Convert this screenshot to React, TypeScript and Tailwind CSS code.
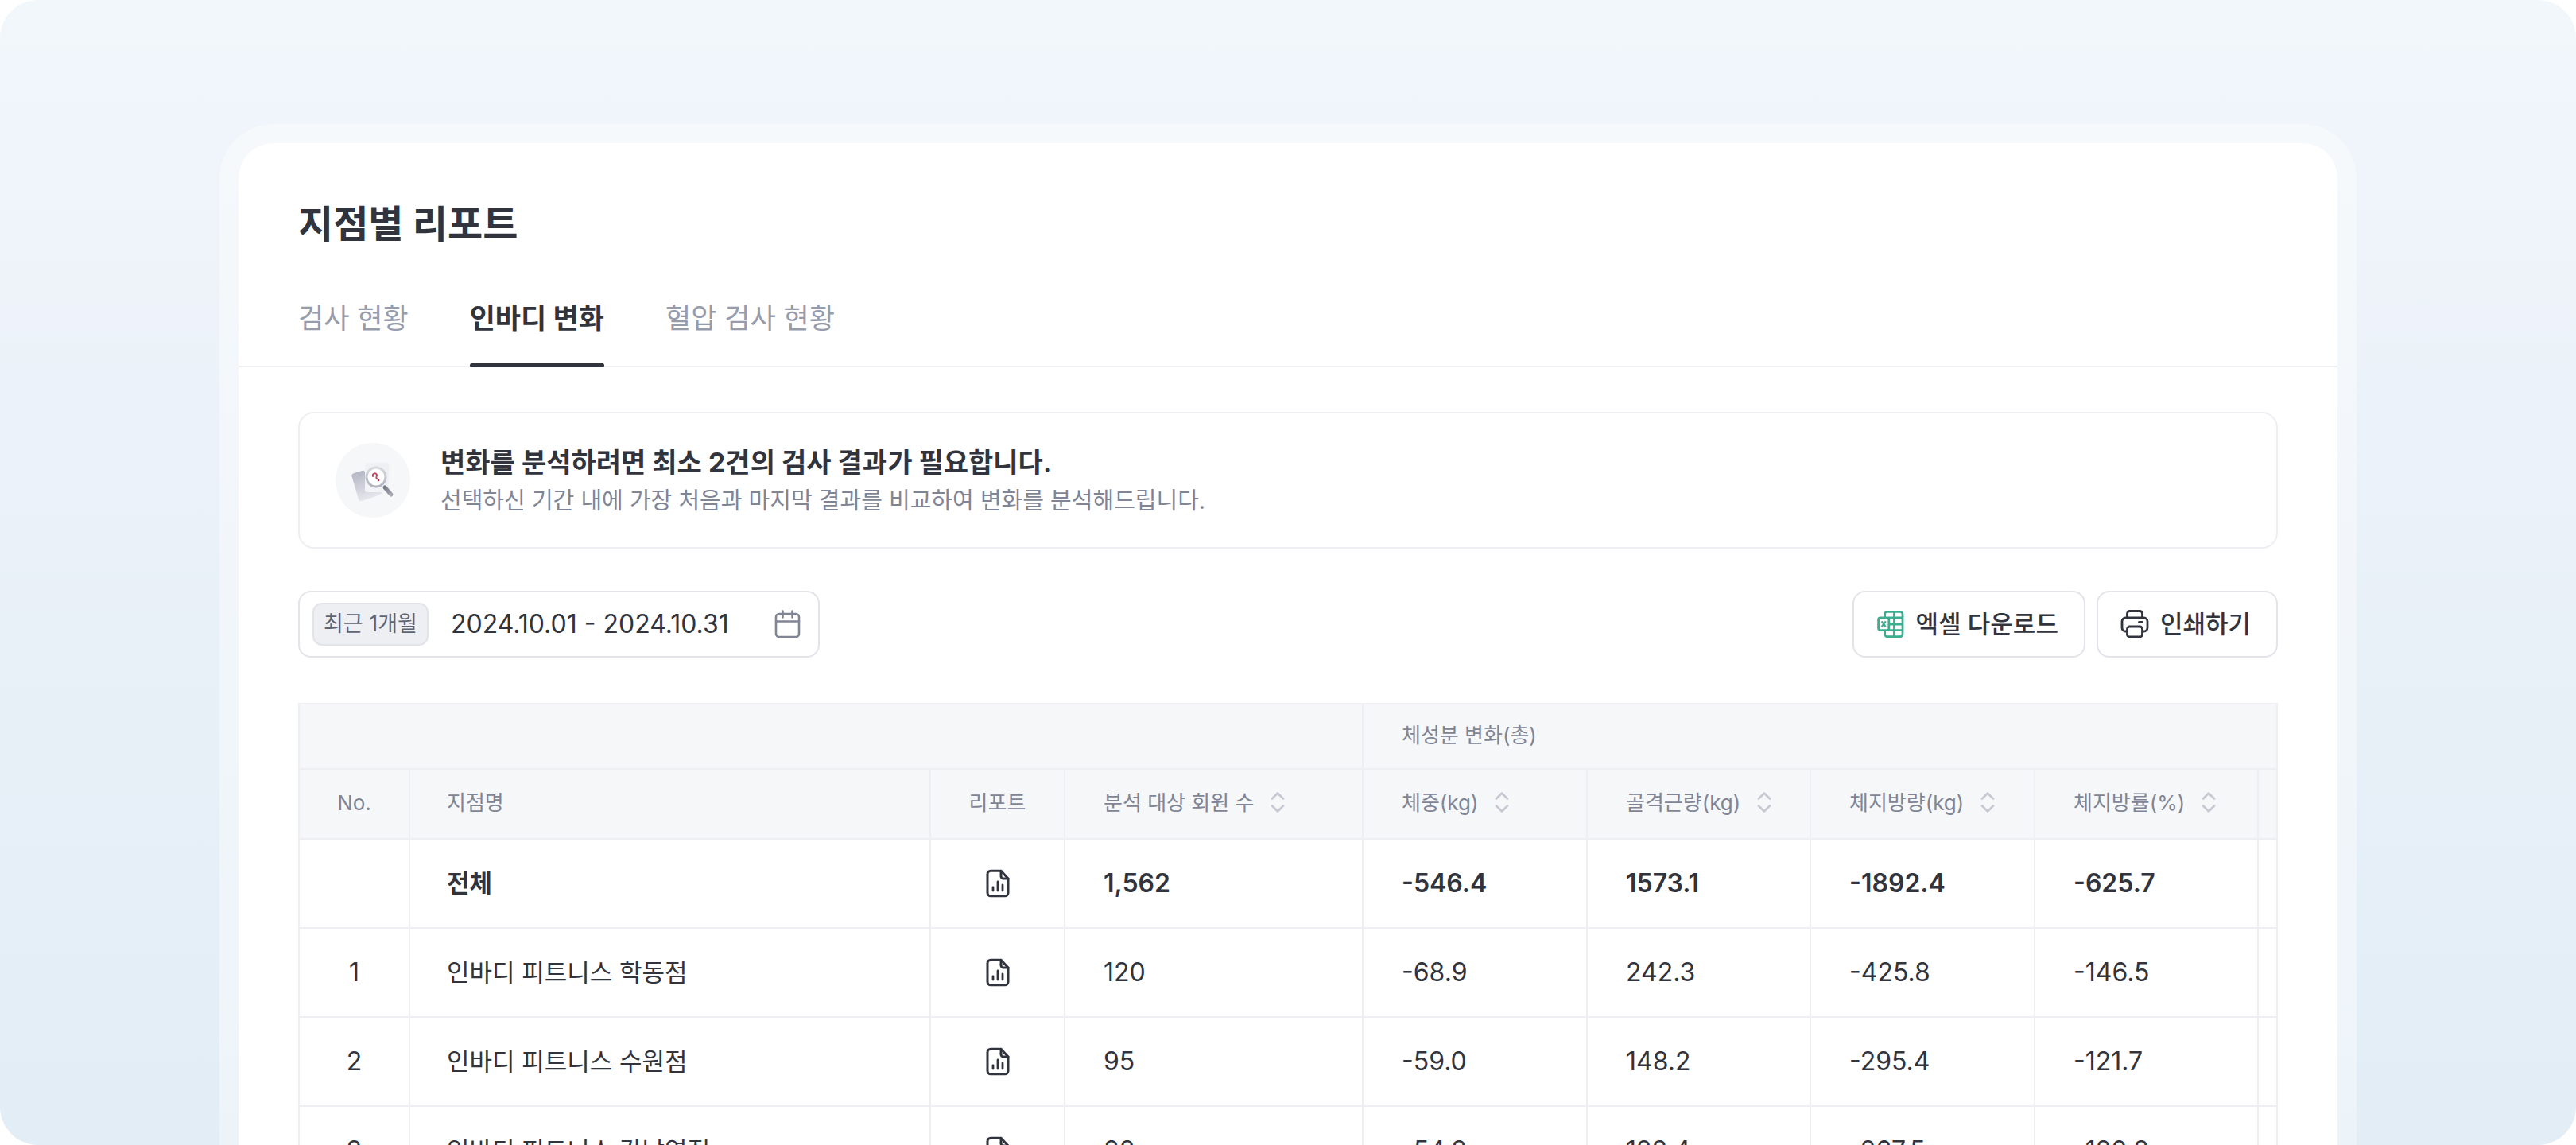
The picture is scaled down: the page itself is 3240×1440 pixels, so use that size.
import type { ReactNode } from "react";

const FONT = "font-['Inter','Noto_Sans_CJK_KR',sans-serif]";

const tabs = [
  { label: "검사 현황", active: false },
  { label: "인바디 변화", active: true },
  { label: "혈압 검사 현황", active: false },
];

const sortable = ["분석 대상 회원 수", "체중(kg)", "골격근량(kg)", "체지방량(kg)", "체지방률(%)"];

const rows = [
  { no: "", name: "전체", values: ["1,562", "-546.4", "1573.1", "-1892.4", "-625.7"], total: true },
  { no: "1", name: "인바디 피트니스 학동점", values: ["120", "-68.9", "242.3", "-425.8", "-146.5"], total: false },
  { no: "2", name: "인바디 피트니스 수원점", values: ["95", "-59.0", "148.2", "-295.4", "-121.7"], total: false },
  { no: "3", name: "인바디 피트니스 강남역점", values: ["88", "-54.8", "128.4", "-267.5", "-120.8"], total: false },
];

function SearchIllustration() {
  return (
    <svg viewBox="0 0 94 94" className="size-[94px] shrink-0" aria-hidden="true">
      <defs>
        <linearGradient id="back" x1="0" y1="0" x2="0.3" y2="1">
          <stop offset="0" stopColor="#aeb2bf" />
          <stop offset="1" stopColor="#e6e7ed" />
        </linearGradient>
        <linearGradient id="front" x1="1" y1="0" x2="0" y2="1">
          <stop offset="0" stopColor="#eeeff2" />
          <stop offset="1" stopColor="#f3f4f7" />
        </linearGradient>
        <linearGradient id="ring" x1="0" y1="0" x2="0" y2="1">
          <stop offset="0" stopColor="#d6d8de" />
          <stop offset="1" stopColor="#b0b4bf" />
        </linearGradient>
        <linearGradient id="handle" x1="0" y1="0" x2="1" y2="1">
          <stop offset="0" stopColor="#777b85" />
          <stop offset="1" stopColor="#a5a8b0" />
        </linearGradient>
      </defs>
      <circle cx="47" cy="47" r="47" fill="#f6f7f9" />
      <path d="M22 38.500L35 34.500 58 56V63a3 3 0 0 1-2 2.500L33 73a3 3 0 0 1-4-2L20.500 42a3 3 0 0 1 1.500-3.500Z" fill="url(#back)" />
      <rect x="37" y="25" width="30" height="37" rx="3" fill="url(#front)" />
      <path d="m62 56 8 9" stroke="url(#handle)" strokeWidth="5" strokeLinecap="round" />
      <circle cx="51" cy="43" r="12" fill="#fff" stroke="url(#ring)" strokeWidth="3" />
      <path d="M47 42c-1-4 4-5 5-2 .6 2-2 3 0 5" fill="none" stroke="#c34a60" strokeWidth="2" strokeLinecap="round" />
      <circle cx="54" cy="47" r="1.300" fill="#b5213d" />
    </svg>
  );
}

function CalendarIcon() {
  return (
    <svg viewBox="0 0 36 36" className="size-9 shrink-0" fill="none" stroke="#7f8595" strokeWidth="2.600" strokeLinecap="round" strokeLinejoin="round" aria-hidden="true">
      <rect x="3" y="5" width="29" height="29" rx="4" />
      <path d="M3 14.500h29M11.500 1.500v8M23.500 1.500v8" />
    </svg>
  );
}

function ExcelIcon() {
  return (
    <svg viewBox="0 0 36 36" className="size-9 shrink-0" fill="none" stroke="#3aae8f" strokeWidth="2.800" strokeLinejoin="round" aria-hidden="true">
      <path d="M10.600 9.800V5.400a3 3 0 0 1 3-3H30a3 3 0 0 1 3 3V30.600a3 3 0 0 1-3 3H13.600a3 3 0 0 1-3-3V25.700" />
      <path d="M14.500 9.800H33M16.500 18H33M14.500 25.700H33M22.500 2.400V33.600" />
      <rect x="2.600" y="9.800" width="13.200" height="15.900" rx="2.500" />
      <path d="m6.600 14.300 5.200 7M11.800 14.300l-5.200 7" strokeWidth="2.200" />
    </svg>
  );
}

function PrinterIcon() {
  return (
    <svg viewBox="0 0 36 36" className="size-9 shrink-0" fill="none" stroke="#31343d" strokeWidth="2.800" strokeLinejoin="round" strokeLinecap="round" aria-hidden="true">
      <path d="M8.500 10V4.500a3 3 0 0 1 3-3h13a3 3 0 0 1 3 3V10" />
      <path d="M8 27H6.500a4.500 4.500 0 0 1-4.500-4.500V14.500A4.500 4.500 0 0 1 6.500 10h23a4.500 4.500 0 0 1 4.500 4.500v8a4.500 4.500 0 0 1-4.500 4.500H28" />
      <rect x="8.500" y="21" width="19" height="13" rx="3" />
      <path d="M23.500 15.500h4" />
    </svg>
  );
}

function ReportIcon() {
  return (
    <svg viewBox="0 0 36 36" className="size-9" fill="none" stroke="#31343d" strokeWidth="3" strokeLinejoin="round" strokeLinecap="round" aria-hidden="true">
      <path d="M22 2.200H9a4 4 0 0 0-4 4v23.600a4 4 0 0 0 4 4h18a4 4 0 0 0 4-4V12L22 2.200Z" />
      <path d="M22 2.200V9a3 3 0 0 0 3 3h6" />
      <path d="M12 23v4M18 16v11M24 20v7" strokeWidth="2.800" />
    </svg>
  );
}

function SortIcon() {
  return (
    <svg viewBox="0 0 20 28" className="h-7 w-5 shrink-0" fill="none" stroke="#c8cad3" strokeWidth="2.800" strokeLinecap="round" strokeLinejoin="round" aria-hidden="true">
      <path d="m3 9.500 7-7 7 7M3 18.500l7 7 7-7" />
    </svg>
  );
}

function ActionButton({ icon, children }: { icon: ReactNode; children: ReactNode }) {
  return (
    <button type="button" className="flex h-21 items-center gap-[14px] rounded-2xl border-2 border-[#e3e3ea] bg-white pr-8 pl-7 text-[31px] font-medium">
      {icon}
      {children}
    </button>
  );
}

export default function App() {
  return (
    <div className="h-screen overflow-hidden bg-white">
      <div className={`h-full overflow-hidden rounded-[48px] bg-linear-to-b from-[#f1f7fb] via-[#edf3f9] via-25% to-[#e2edf6] px-69 pt-39 text-[#31343d] ${FONT}`}>
        <div className="rounded-t-[68px] bg-white/40 px-6 pt-6">
          <main className="rounded-t-[44px] bg-white pt-18">
            <h1 className="px-[75px] text-[48px] leading-[60px] font-bold">지점별 리포트</h1>
            <nav className="mt-12 flex gap-[77px] border-b-2 border-[#eeeef3] px-[75px]" aria-label="리포트 종류">
              {tabs.map((tab) => (
                <a
                  key={tab.label}
                  href="#"
                  aria-current={tab.active ? "page" : undefined}
                  className={
                    tab.active
                      ? "relative h-25 text-[35px] leading-[80px] font-bold after:absolute after:inset-x-0 after:-bottom-0.5 after:h-[5px] after:rounded-full after:bg-[#31343d]"
                      : "relative h-25 text-[35px] leading-[80px] text-[#969cac]"
                  }
                >
                  {tab.label}
                </a>
              ))}
            </nav>
            <div className="px-[75px] pt-14">
              <section className="flex h-[172px] items-center gap-[38px] rounded-[20px] border-2 border-[#eeeef3] pr-11 pl-[45px]">
                <SearchIllustration />
                <div className="pt-0.5">
                  <p className="text-[34px] leading-[50px] font-bold">변화를 분석하려면 최소 2건의 검사 결과가 필요합니다.</p>
                  <p className="text-[29px] leading-[46px] text-[#7f8595]">선택하신 기간 내에 가장 처음과 마지막 결과를 비교하여 변화를 분석해드립니다.</p>
                </div>
              </section>
              <div className="mt-[53px] flex items-center justify-between">
                <button type="button" className="flex h-21 items-center rounded-2xl border-2 border-[#e3e3ea] pr-5 pl-4">
                  <span className="flex h-[54px] items-center rounded-xl border-2 border-[#e3e3ea] bg-[#eeeff3] px-3 text-[27px] text-[#5f6472]">최근 1개월</span>
                  <span className="ml-7 text-[32px]">2024.10.01 - 2024.10.31</span>
                  <span className="ml-14">
                    <CalendarIcon />
                  </span>
                </button>
                <div className="flex gap-[14px]">
                  <ActionButton icon={<ExcelIcon />}>엑셀 다운로드</ActionButton>
                  <ActionButton icon={<PrinterIcon />}>인쇄하기</ActionButton>
                </div>
              </div>
              <table className="mt-[57px] w-full table-fixed border-collapse text-left [&_td]:border-2 [&_td]:border-[#eeeef3] [&_th]:border-2 [&_th]:border-[#eeeef3] [&_th]:pb-1 [&_th]:text-[26px] [&_th]:font-normal">
                <colgroup>
                  <col className="w-[139px]" />
                  <col />
                  <col className="w-[169px]" />
                  <col className="w-[375px]" />
                  <col className="w-[282px]" />
                  <col className="w-[281px]" />
                  <col className="w-[282px]" />
                  <col className="w-[281px]" />
                  <col className="w-[24px]" />
                </colgroup>
                <thead className="bg-[#f6f7f9] text-[#7f8595]">
                  <tr className="h-[82px]">
                    <th colSpan={4} />
                    <th colSpan={5} className="px-12">체성분 변화(총)</th>
                  </tr>
                  <tr className="h-[88px]">
                    <th className="text-center">No.</th>
                    <th className="px-[46px]">지점명</th>
                    <th className="text-center">리포트</th>
                    {sortable.map((label) => (
                      <th key={label} className="pl-12">
                        <button type="button" className="flex items-center gap-5 whitespace-nowrap">
                          {label}
                          <SortIcon />
                        </button>
                      </th>
                    ))}
                    <th />
                  </tr>
                </thead>
                <tbody>
                  {rows.map((row) => (
                    <tr key={row.name} className={row.total ? "h-[112px] font-semibold" : "h-[112px]"}>
                      <td className="text-center text-[32px]">{row.no}</td>
                      <td className="px-[46px] text-[31px]">{row.name}</td>
                      <td>
                        <button type="button" aria-label={`${row.name} 리포트`} className="mx-auto block">
                          <ReportIcon />
                        </button>
                      </td>
                      {row.values.map((value) => (
                        <td key={value} className="pl-12 text-[32px]">{value}</td>
                      ))}
                      <td />
                    </tr>
                  ))}
                </tbody>
              </table>
            </div>
          </main>
        </div>
      </div>
    </div>
  );
}
